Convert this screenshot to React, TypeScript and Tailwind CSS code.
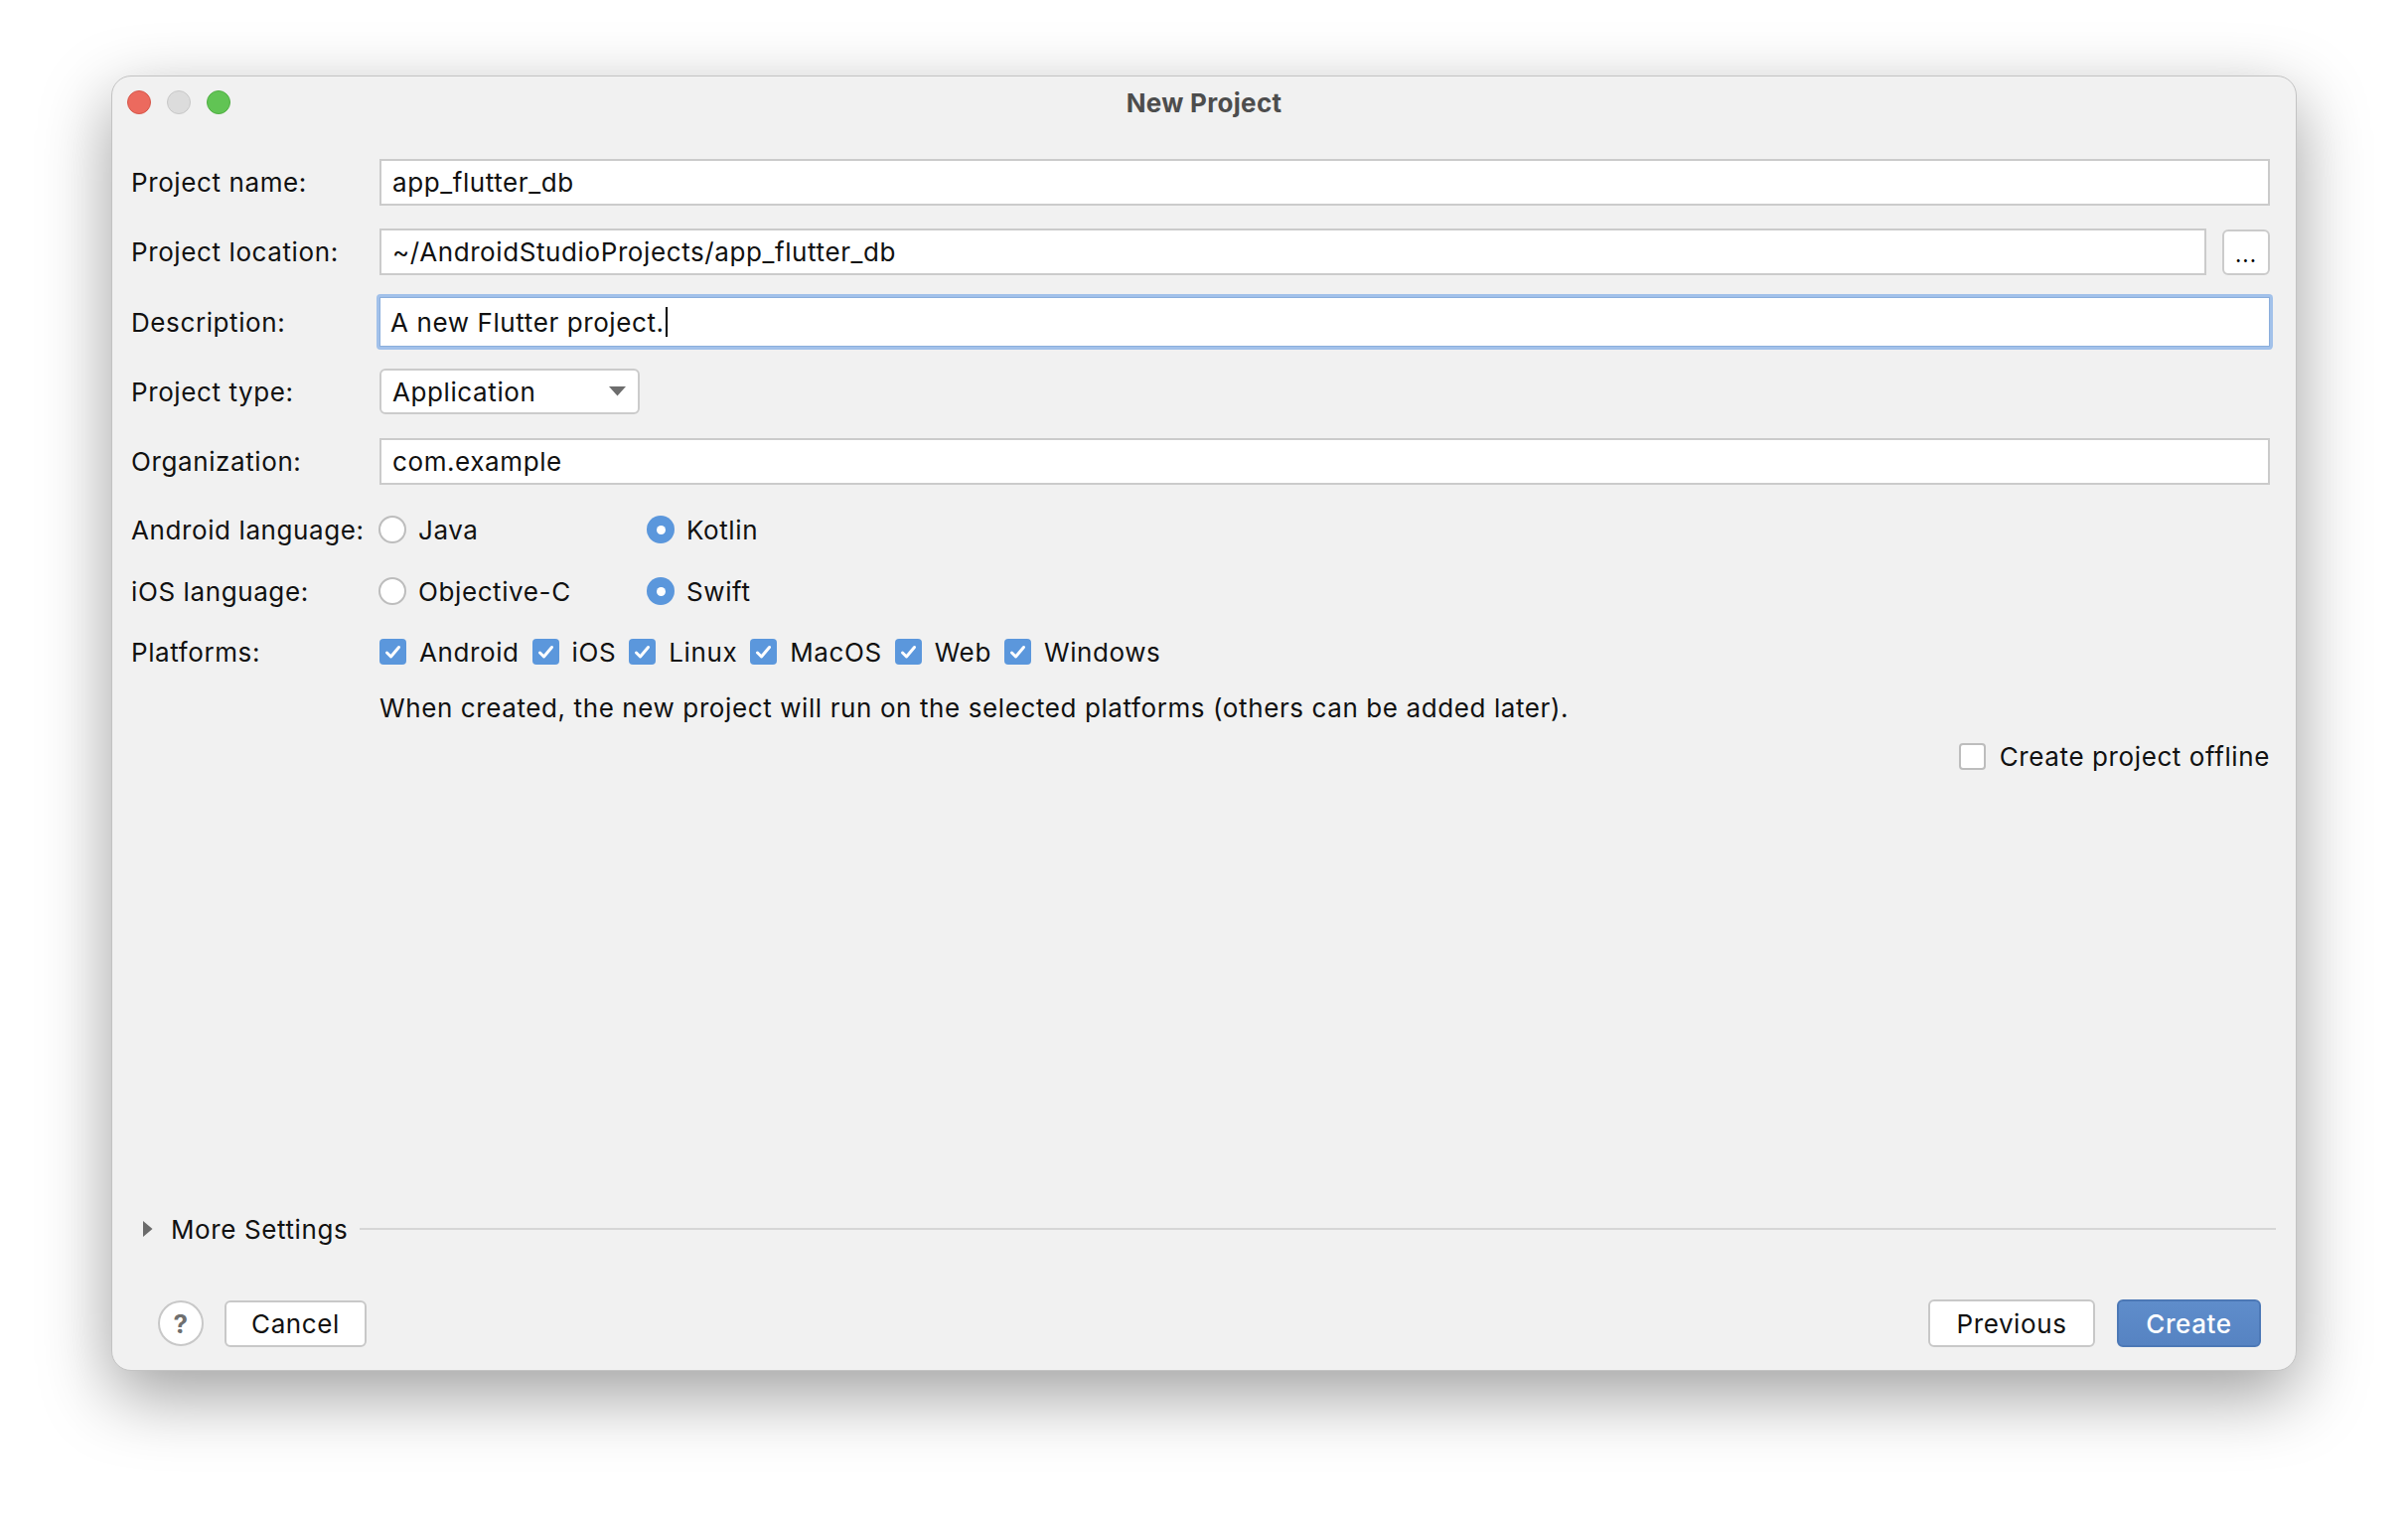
import React from 'react';

const font = { fontFamily: 'Inter, "Noto Sans", sans-serif', letterSpacing: '0.6px' };

const Field = ({ value }: { value: string }) => (
  <div className="flex-1 h-full bg-white border-2 border-[#cbcbcb] flex items-center pl-[11px] text-[26px] text-[#111]">
    {value}
  </div>
);

const Radio = ({ checked, label }: { checked?: boolean; label: string }) => (
  <div className="flex items-center gap-[12px]">
    {checked ? (
      <div className="w-[28px] h-[28px] rounded-full bg-[#5b97dc] flex items-center justify-center">
        <div className="w-[9px] h-[9px] rounded-full bg-white" />
      </div>
    ) : (
      <div className="w-[28px] h-[28px] rounded-full bg-white border-2 border-[#bdbdbd]" />
    )}
    <span className="text-[26px] text-[#111]">{label}</span>
  </div>
);

const Check = ({ checked }: { checked?: boolean }) =>
  checked ? (
    <div className="w-[27px] h-[26px] rounded-[4px] bg-[#5b97dc] flex items-center justify-center">
      <svg width="17" height="15" viewBox="0 0 17 15">
        <path d="M2.5 8 L6.5 12 L14.5 2.5" fill="none" stroke="white" strokeWidth="3" strokeLinecap="round" strokeLinejoin="round" />
      </svg>
    </div>
  ) : (
    <div className="w-[27px] h-[27px] rounded-[4px] bg-white border-2 border-[#bdbdbd]" />
  );

const Label = ({ children }: { children: React.ReactNode }) => (
  <div className="w-[250px] shrink-0 text-[26px] text-[#111]">{children}</div>
);

export default function App() {
  const platforms = ['Android', 'iOS', 'Linux', 'MacOS', 'Web', 'Windows'];
  return (
    <div className="w-[2424px] h-[1528px] bg-white pt-[76px]" style={font}>
      <div className="mx-auto w-[2200px] h-[1304px] bg-[#f1f1f1] rounded-[20px] border border-[#c3c3c3] shadow-[0_24px_70px_rgba(0,0,0,0.38)] flex flex-col px-[19px] pb-[23px]">
        {/* title bar */}
        <div className="relative h-[56px] flex items-center">
          <div className="flex gap-[16px] ml-[-4px] mt-[-4px]">
            <div className="w-[24px] h-[24px] rounded-full bg-[#ec6a5e] border border-[#d65649]" />
            <div className="w-[24px] h-[24px] rounded-full bg-[#dcdcdc] border border-[#c8c8c8]" />
            <div className="w-[24px] h-[24px] rounded-full bg-[#61c454] border border-[#4fae42]" />
          </div>
          <div className="absolute inset-0 flex items-center justify-center font-bold text-[26px] text-[#4d4d4d] mt-[-4px] tracking-[0.3px]">
            New Project
          </div>
        </div>

        <div className="flex flex-col pr-[7px]">
          <div className="flex items-center h-[47px] mt-[27px]">
            <Label>Project name:</Label>
            <Field value="app_flutter_db" />
          </div>
          <div className="flex items-center h-[47px] mt-[23px]">
            <Label>Project location:</Label>
            <Field value="~/AndroidStudioProjects/app_flutter_db" />
            <div className="ml-[16px] w-[48px] h-[46px] bg-white border-2 border-[#cbcbcb] rounded-[6px] flex items-end justify-center pb-[8px] text-[22px] leading-none tracking-[1px]">
              ...
            </div>
          </div>
          <div className="flex items-center h-[56px] mt-[19px]">
            <Label>Description:</Label>
            <div className="flex-1 h-full ml-[-3px] mr-[-3px] border-[3px] border-[#a2c1ea] rounded-[4px] bg-white flex">
              <div className="flex-1 border border-[#8aaedc] flex items-center pl-[10px] text-[26px] text-[#111]">
                A new Flutter project.
                <span className="w-[2px] h-[30px] bg-black ml-[1px]" />
              </div>
            </div>
          </div>
          <div className="flex items-center h-[46px] mt-[19px]">
            <Label>Project type:</Label>
            <div className="w-[262px] h-full bg-white border-2 border-[#cbcbcb] rounded-[6px] flex items-center justify-between pl-[11px] pr-[12px] text-[26px] text-[#111]">
              <span>Application</span>
              <svg width="17" height="10" viewBox="0 0 17 10">
                <path d="M0 0 H17 L8.5 9.5 Z" fill="#6d6d6d" />
              </svg>
            </div>
          </div>
          <div className="flex items-center h-[47px] mt-[24px]">
            <Label>Organization:</Label>
            <Field value="com.example" />
          </div>

          <div className="flex items-center h-[40px] mt-[25px]">
            <Label>Android language:</Label>
            <div className="w-[270px] ml-[-1px]">
              <Radio label="Java" />
            </div>
            <Radio checked label="Kotlin" />
          </div>
          <div className="flex items-center h-[40px] mt-[22px]">
            <Label>iOS language:</Label>
            <div className="w-[270px] ml-[-1px]">
              <Radio label="Objective-C" />
            </div>
            <Radio checked label="Swift" />
          </div>
          <div className="flex items-center h-[40px] mt-[21px]">
            <Label>Platforms:</Label>
            <div className="flex items-center gap-[13px]">
              {platforms.map((p) => (
                <React.Fragment key={p}>
                  <Check checked />
                  <span className="text-[26px] text-[#111]">{p}</span>
                </React.Fragment>
              ))}
            </div>
          </div>
          <div className="flex items-center h-[40px] mt-[16px] pl-[250px] text-[26px] text-[#111]">
            When created, the new project will run on the selected platforms (others can be added later).
          </div>
          <div className="flex items-center justify-end h-[40px] mt-[9px] gap-[14px] text-[26px] text-[#111]">
            <Check />
            <span>Create project offline</span>
          </div>
        </div>

        <div className="flex-1" />

        {/* more settings */}
        <div className="flex items-center h-[40px] pr-[1px]">
          <svg width="12" height="18" viewBox="0 0 12 18" className="ml-[11px]">
            <path d="M1 1 L10.5 9 L1 17 Z" fill="#6b6b6b" />
          </svg>
          <span className="ml-[17px] text-[26px] text-[#111]">More Settings</span>
          <div className="flex-1 h-[2px] bg-[#d6d6d6] ml-[12px]" />
        </div>

        {/* bottom buttons */}
        <div className="flex items-center h-[48px] mt-[51px] pl-[27px] pr-[16px]">
          <div className="w-[46px] h-[46px] rounded-full bg-white border-2 border-[#c8c8c8] flex items-center justify-center text-[26px] font-bold text-[#6f6f6f]">
            ?
          </div>
          <div className="ml-[21px] w-[143px] h-[47px] bg-white border-2 border-[#c8c8c8] rounded-[6px] flex items-center justify-center text-[26px] text-[#111]">
            Cancel
          </div>
          <div className="flex-1" />
          <div className="w-[168px] h-[48px] bg-white border-2 border-[#c8c8c8] rounded-[6px] flex items-center justify-center text-[26px] text-[#111]">
            Previous
          </div>
          <div className="ml-[22px] w-[145px] h-[48px] bg-gradient-to-b from-[#5f8dcb] to-[#5683c2] border-2 border-[#4c78b6] rounded-[6px] flex items-center justify-center text-[26px] text-white font-medium">
            Create
          </div>
        </div>
      </div>
    </div>
  );
}
